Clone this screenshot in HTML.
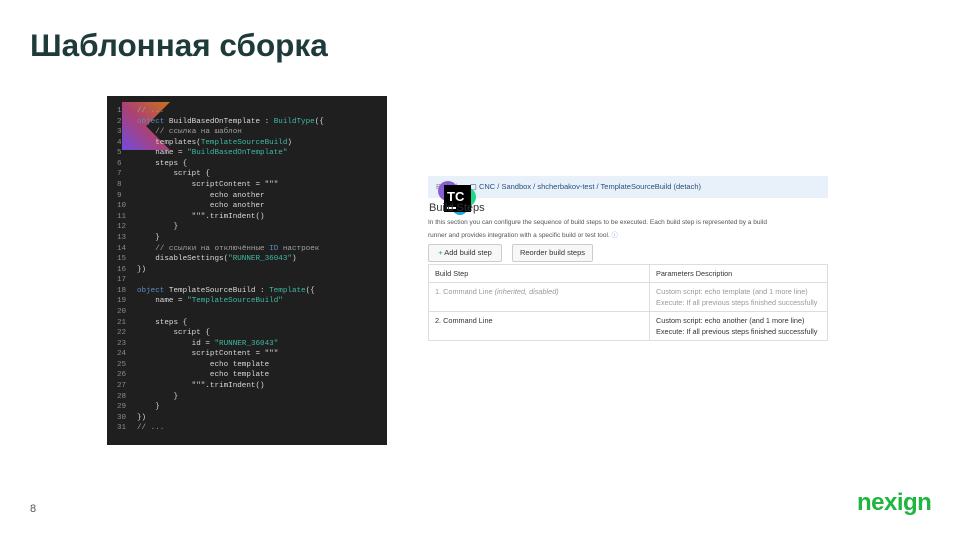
<!DOCTYPE html>
<html><head><meta charset="utf-8"><style>
body{margin:0;width:960px;height:540px;background:#fff;position:relative;overflow:hidden;font-family:"Liberation Sans",sans-serif}
.t{position:absolute;left:30px;top:27px;font-size:31.5px;font-weight:bold;color:#1e3a3a}
.code{position:absolute;left:107px;top:96px;width:280px;height:349px;background:#1f1f1f}
.code pre{margin:0;position:absolute;left:10px;top:10px;font-family:"Liberation Mono",monospace;font-size:7.6px;line-height:10.58px;color:#d8d8d8}
.n{color:#8a8a8a;display:inline-block;width:20px}
.g{color:#3fb9a0}.b{color:#5a8ec4}.c{color:#a0a0a0}
.tc{position:absolute;left:428px;top:176px;width:400px;height:22px;background:#e8f1fa;font-size:7.5px;color:#2a4f7a;line-height:22px;white-space:nowrap}
.s{position:absolute;font-size:6.5px;color:#555;white-space:nowrap}
.btn{position:absolute;top:244px;height:18px;border:1px solid #ccc;border-radius:2px;background:#f7f7f7;font-size:7.5px;line-height:16px;color:#333;box-sizing:border-box;text-align:center;white-space:nowrap}
table{position:absolute;left:428px;top:264px;width:400px;border-collapse:collapse;font-size:7.3px;color:#333}
td{border:1px solid #ddd;padding:3px 6px;vertical-align:top;line-height:11px;white-space:nowrap}
.gr{color:#999}
</style></head><body>
<div class="t">Шаблонная сборка</div>
<div class="code">
<svg style="position:absolute;left:15px;top:6px" width="48" height="48"><defs><linearGradient id="k" x1="0" y1="1" x2="1" y2="0"><stop offset="0" stop-color="#7f52ff"/><stop offset=".5" stop-color="#c6477f"/><stop offset="1" stop-color="#e8811b"/></linearGradient></defs><polygon points="0,0 48,0 24,24 48,48 0,48" fill="url(#k)" opacity=".85"/></svg>
<pre><span class="n">1</span><span class="c">// ...</span>
<span class="n">2</span><span class="b">object</span> BuildBasedOnTemplate : <span class="g">BuildType</span>({
<span class="n">3</span>    <span class="c">// ссылка на шаблон</span>
<span class="n">4</span>    templates(<span class="g">TemplateSourceBuild</span>)
<span class="n">5</span>    name = <span class="g">"BuildBasedOnTemplate"</span>
<span class="n">6</span>    steps {
<span class="n">7</span>        script {
<span class="n">8</span>            scriptContent = """
<span class="n">9</span>                echo another
<span class="n">10</span>                echo another
<span class="n">11</span>            """.trimIndent()
<span class="n">12</span>        }
<span class="n">13</span>    }
<span class="n">14</span>    <span class="c">// ссылки на отключённые </span><span class="b">ID</span><span class="c"> настроек</span>
<span class="n">15</span>    disableSettings(<span class="g">"RUNNER_36043"</span>)
<span class="n">16</span>})
<span class="n">17</span>
<span class="n">18</span><span class="b">object</span> TemplateSourceBuild : <span class="g">Template</span>({
<span class="n">19</span>    name = <span class="g">"TemplateSourceBuild"</span>
<span class="n">20</span>
<span class="n">21</span>    steps {
<span class="n">22</span>        script {
<span class="n">23</span>            id = <span class="g">"RUNNER_36043"</span>
<span class="n">24</span>            scriptContent = """
<span class="n">25</span>                echo template
<span class="n">26</span>                echo template
<span class="n">27</span>            """.trimIndent()
<span class="n">28</span>        }
<span class="n">29</span>    }
<span class="n">30</span>})
<span class="n">31</span><span class="c">// ...</span></pre>
</div>
<div class="tc"><span style="margin-left:8px;color:#888">Based on</span> ▢ CNC / Sandbox / shcherbakov-test / TemplateSourceBuild (detach)</div>
<svg style="position:absolute;left:436px;top:179px" width="42" height="38"><circle cx="12" cy="12" r="10" fill="#8a5cd6"/><circle cx="30" cy="18" r="10" fill="#21d789"/><circle cx="24" cy="28" r="8" fill="#1aa3e8"/><rect x="8" y="6" width="27" height="27" fill="#000"/><text x="11" y="22" font-family="Liberation Sans" font-weight="bold" font-size="13" fill="#fff">TC</text><rect x="11" y="28" width="9" height="2" fill="#fff"/></svg>
<div style="position:absolute;left:429px;top:202px;font-size:11px;color:#333">Build Steps</div>
<div class="s" style="left:428px;top:219px">In this section you can configure the sequence of build steps to be executed. Each build step is represented by a build</div>
<div class="s" style="left:428px;top:229px">runner and provides integration with a specific build or test tool. <span style="color:#6a9fd8">ⓘ</span></div>
<div class="btn" style="left:428px;width:74px"><span style="color:#2a9d3a">+</span> Add build step</div>
<div class="btn" style="left:512px;width:81px">Reorder build steps</div>
<table>
<tr><td style="width:208px">Build Step</td><td>Parameters Description</td></tr>
<tr><td class="gr" style="height:20px">1. Command Line <i>(inherited, disabled)</i></td><td class="gr">Custom script: echo template (and 1 more line)<br>Execute: If all previous steps finished successfully</td></tr>
<tr><td style="height:20px">2. Command Line</td><td>Custom script: echo another (and 1 more line)<br>Execute: If all previous steps finished successfully</td></tr>
</table>
<div style="position:absolute;left:30px;top:503px;font-size:11px;color:#555">8</div>
<div style="position:absolute;left:857px;top:489px;font-size:24px;font-weight:bold;color:#1fb53f;letter-spacing:-0.5px">nexign</div>
</body></html>
